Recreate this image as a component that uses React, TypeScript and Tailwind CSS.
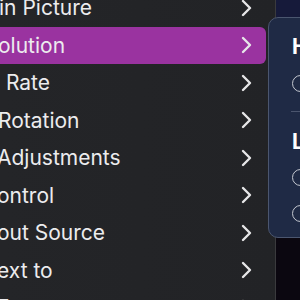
import React from 'react';

const rows = [
  { label: 'in Picture', pad: 'ml-[-1px]' },
  { label: 'olution', pad: 'ml-[-2px]', active: true },
  { label: ' Rate', pad: 'ml-0' },
  { label: 'Rotation', pad: 'ml-[-2px]' },
  { label: 'Adjustments', pad: 'ml-[-3px]' },
  { label: 'ontrol', pad: 'ml-[-3px]' },
  { label: 'out Source', pad: 'ml-[-3px]' },
  { label: 'ext to', pad: 'ml-[-3px]' },
  { label: 'Format', pad: 'ml-[-3px]' },
];

function Chevron() {
  return (
    <svg width="12" height="18" viewBox="0 0 12 18" className="shrink-0">
      <path d="M3 2 L10 9 L3 16" fill="none" stroke="#e6e6e8" strokeWidth="2.4" strokeLinecap="round" strokeLinejoin="round" />
    </svg>
  );
}

function Radio() {
  return <div className="w-[17px] h-[17px] rounded-full border-[1.5px] border-[#c4c8d0] ml-[23px]" />;
}

export default function App() {
  return (
    <div
      className="relative w-[300px] h-[300px] overflow-hidden bg-[#0b0710] flex"
      style={{ fontFamily: 'Inter, "Noto Sans", sans-serif' }}
    >
      {/* main menu */}
      <div className="w-[276px] h-[320px] shrink-0 bg-gradient-to-r from-[#242528] to-[#222326] border-r border-[#3a3a3d] flex flex-col mt-[-11px] overflow-hidden">
        {rows.map((r) => (
          <div
            key={r.label}
            className={`h-[37.5px] shrink-0 flex items-center pr-[14px] mr-[9px] ${
              r.active ? 'bg-[#9a33a0] rounded-r-[6px]' : ''
            }`}
          >
            <span className={`flex-1 whitespace-pre text-[21px] leading-none text-[#ececee] ${r.pad}`}>
              {r.label}
            </span>
            <Chevron />
          </div>
        ))}
      </div>

      {/* backdrop above submenu */}
      <div className="flex-1 flex flex-col">
        <div className="h-[17px] bg-[#161a3a]" />
      </div>

      {/* submenu */}
      <div className="absolute left-[268px] top-[17px] w-[60px] h-[221px] rounded-[10px] bg-[#1f2a45] border border-[#4b566f] flex flex-col pt-[18px]">
        <div className="pl-[23px] text-[21px] font-bold leading-none text-white h-[20px] flex items-center">H</div>
        <div className="h-[38px] flex items-center mt-[8px]">
          <Radio />
        </div>
        <div className="h-px bg-[#4b556e] ml-[22px] mt-[9px]" />
        <div className="pl-[23px] text-[21px] font-bold leading-none text-white h-[20px] flex items-center mt-[19px]">L</div>
        <div className="h-[36px] flex items-center mt-[8px]">
          <Radio />
        </div>
        <div className="h-[36px] flex items-center">
          <Radio />
        </div>
      </div>
    </div>
  );
}
